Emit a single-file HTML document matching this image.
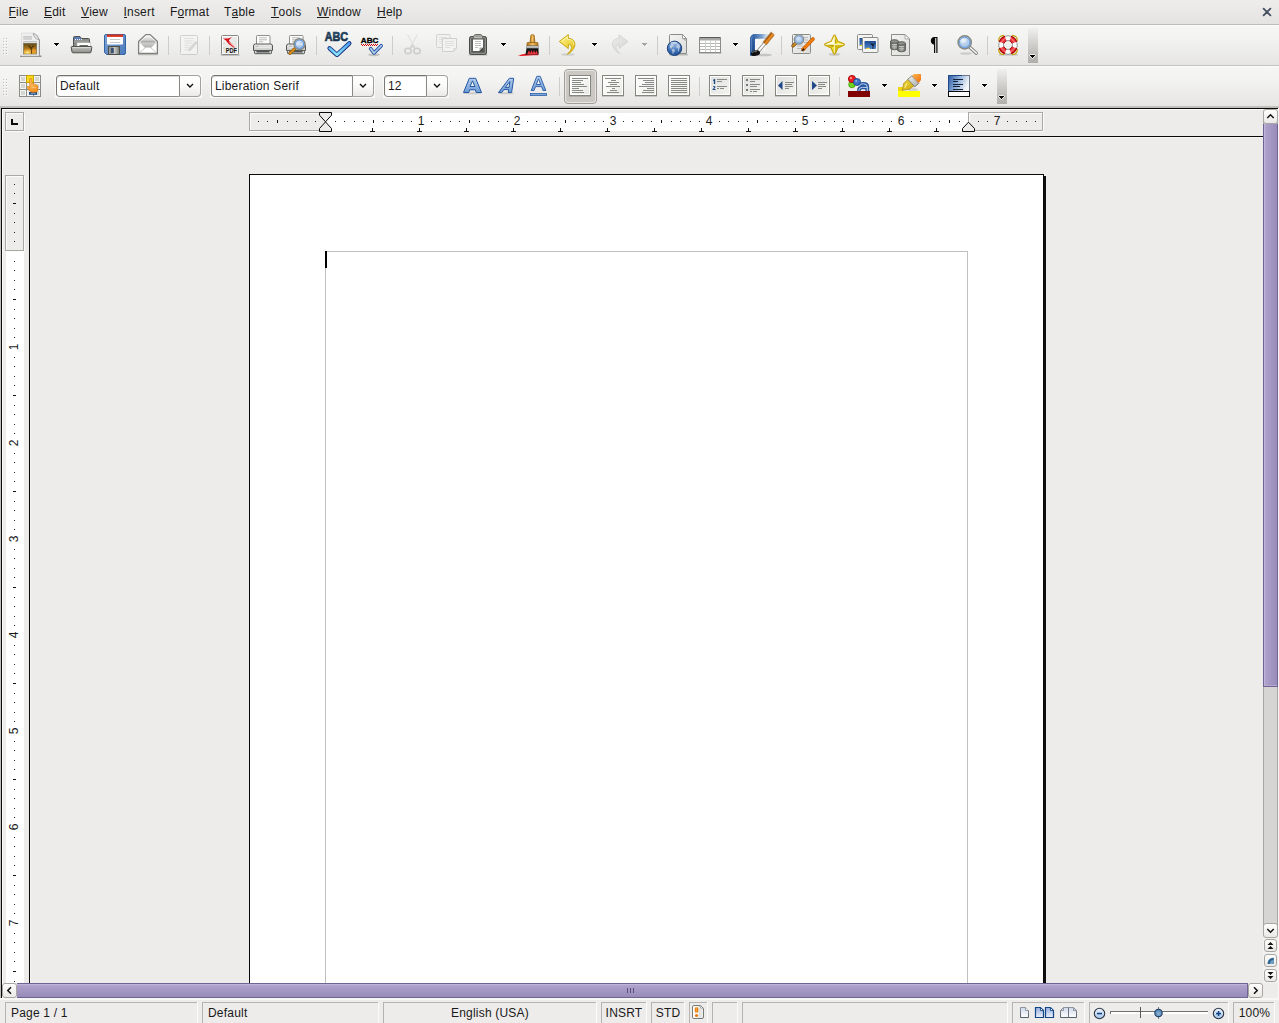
<!DOCTYPE html>
<html lang="en">
<head>
<meta charset="utf-8">
<title>Untitled 1 - Writer</title>
<style>
*{box-sizing:border-box;margin:0;padding:0}
html,body{width:1279px;height:1023px;overflow:hidden;background:#edeceb}
body{position:relative;font-family:"Liberation Sans",sans-serif;font-size:12px;color:#1a1a1a;line-height:1}
#app{position:absolute;left:0;top:0;width:1279px;height:1023px;overflow:hidden}
#app div,#app span,#app svg{position:absolute}
svg{overflow:visible}
svg text{font-family:"Liberation Sans",sans-serif}
/* menubar */
#menubar{left:0;top:0;width:1279px;height:24px;background:linear-gradient(#eeedec,#e4e3e1)}
#menuline{left:0;top:24px;width:1279px;height:1px;background:#bebcb9}
#menubar span{top:5px;letter-spacing:0.2px;white-space:nowrap;font-size:12px;line-height:15px;height:15px;color:#1a1a1a}
#menubar u{text-decoration:none;border-bottom:1px solid #1a1a1a;display:inline-block;height:13px;line-height:15px}
/* toolbars */
.tb{left:0;width:1279px;height:40px;background:linear-gradient(#f6f6f5 0,#f3f3f1 30%,#e6e5e3 100%);border-top:1px solid #fbfbfa}
#tb1{top:25px}
#tb1line{left:0;top:65px;width:1279px;height:1px;background:#c5c3c0}
#tb2{top:66px}
#tb2line{left:0;top:106px;width:1279px;height:2px;background:linear-gradient(#c6c4c1,#bbb9b5)}
.sep{width:1px;height:19px;background:#cfcdca}
.dd{width:0;height:0;border-left:3.5px solid transparent;border-right:3.5px solid transparent;border-top:4px solid #111}
.dd.dis{border-top-color:#aaa8a5}
.ovf{width:10px;height:35px;background:linear-gradient(rgba(176,174,171,0.05),#b1afac)}
/* combos */
.cbw{background:#f9f9f8;height:24px;top:74px}
.cb{top:75px;height:22px;border:1px solid #7a7873;border-color:#72706b #8a8884 #8d8b87 #7a7873;border-right:0;border-radius:4px 0 0 4px;background:#fff;box-shadow:inset 0 1px 1px #dcdbd9}
.cb span{left:3px;top:3px;letter-spacing:0.2px;font-size:12px;line-height:15px;white-space:nowrap;color:#1a1a1a}
.cbb{top:75px;width:22px;height:22px;border:1px solid #a3a09b;border-left-color:#8a8884;border-radius:0 4px 4px 0;background:linear-gradient(#ffffff 0,#fcfcfb 45%,#eae9e7 100%)}
/* workspace frame */
#frame{left:0;top:108px;width:1279px;height:892px;background:#edeceb}
#fr-top{left:1px;top:108px;width:1277px;height:1px;background:#0a0a0a}
#fr-left{left:1px;top:108px;width:1px;height:890px;background:#0a0a0a}
#fr-left0{left:0;top:108px;width:1px;height:890px;background:#c0beba}
#fr-hi-top{left:2px;top:109px;width:1261px;height:1px;background:#fbfbfa}
#fr-hi-left{left:2px;top:109px;width:1px;height:889px;background:#fbfbfa}
/* doc area */
#doc{left:29px;top:136px;width:1234px;height:847px;background:#edeceb;border-left:1px solid #0a0a0a;border-top:1px solid #0a0a0a;overflow:hidden}
#doc-hi-t{left:30px;top:137px;width:1233px;height:1px;background:#f6f5f4}
#doc-hi-l{left:30px;top:137px;width:1px;height:846px;background:#f6f5f4}
#page{left:249px;top:174px;width:795px;height:809px;background:#fff;border-left:1px solid #0a0a0a;border-top:1px solid #0a0a0a;border-right:1px solid #0a0a0a}
#pshadow{left:1044px;top:176px;width:2px;height:807px;background:#0f0f0f}
.tbound{background:#c0c0c0}
/* ruler */
.groove{border:1px solid #aaa8a4;box-shadow:inset 1px 1px 0 #fbfbfa,1px 1px 0 #fbfbfa}
.rnum{font-size:12px;line-height:12px;height:12px;width:20px;text-align:center;color:#1a1a1a}
.vnum{font-size:12px;line-height:12px;height:12px;width:20px;text-align:center;color:#1a1a1a;transform:rotate(-90deg);transform-origin:50% 50%}
/* scrollbars */
.sbtn{background:linear-gradient(#fdfdfc,#eceae8);border:1px solid #a9a6a1;border-radius:3px}
.sth-v{background:linear-gradient(90deg,#b2a7cf 0,#a99dc8 30%,#998bb9 100%);border-left:1px solid #6f6494;border-right:1px solid #6f6494}
.sth-h{background:linear-gradient(#b2a7cf 0,#a99dc8 30%,#998bb9 100%);border-top:1px solid #6f6494;border-bottom:1px solid #6f6494}
/* status bar */
.sf{top:1002px;height:21px;border-left:1px solid #b5b3af;border-top:1px solid #b5b3af}
.sfr{top:1002px;height:21px;width:1px;background:#fbfbfa}
.sf span{top:3px;letter-spacing:0.2px;font-size:12px;line-height:15px;white-space:nowrap;color:#1a1a1a}
</style>
</head>
<body>
<div id="app">
<!-- MENUBAR -->
<div id="menubar">
<span style="left:8.5px"><u>F</u>ile</span>
<span style="left:44px"><u>E</u>dit</span>
<span style="left:81px"><u>V</u>iew</span>
<span style="left:123.500px"><u>I</u>nsert</span>
<span style="left:170px">F<u>o</u>rmat</span>
<span style="left:224px">T<u>a</u>ble</span>
<span style="left:271px"><u>T</u>ools</span>
<span style="left:317px"><u>W</u>indow</span>
<span style="left:377px"><u>H</u>elp</span>
<svg style="left:1262px;top:7px" width="10" height="10" viewBox="0 0 10 10"><path d="M1.600 1.600 L8.400 8.400 M8.400 1.600 L1.600 8.400" stroke="#44505f" stroke-width="1.800" stroke-linecap="round" fill="none"/></svg>
</div>
<div id="menuline"></div>
<div class="tb" id="tb1"></div>
<div id="tb1line"></div>
<div class="tb" id="tb2"></div>
<div id="tb2line"></div>
<!-- TOOLBAR 1 -->
<svg style="left:0;top:25px" width="1279" height="41" viewBox="0 25 1279 41">
<defs>
<pattern id="grip" x="3" y="38" width="3" height="3" patternUnits="userSpaceOnUse"><rect x="0" y="0" width="1" height="1" fill="#c3c1be"/><rect x="1" y="1" width="1" height="1" fill="#fdfdfc"/></pattern>
<linearGradient id="gPaper" x1="0" y1="0" x2="0" y2="1"><stop offset="0" stop-color="#ffffff"/><stop offset="1" stop-color="#e3e3e1"/></linearGradient>
<linearGradient id="gPaperD" x1="0" y1="0" x2="1" y2="1"><stop offset="0" stop-color="#f4f4f3"/><stop offset="1" stop-color="#dcdcda"/></linearGradient>
<linearGradient id="gSun" x1="0" y1="0" x2="0" y2="1"><stop offset="0" stop-color="#5a4716"/><stop offset="0.55" stop-color="#b5761a"/><stop offset="1" stop-color="#f6b12a"/></linearGradient>
<radialGradient id="gSunSpot" cx="0.3" cy="0.9" r="0.45"><stop offset="0" stop-color="#fff3a0"/><stop offset="1" stop-color="#f6b12a" stop-opacity="0"/></radialGradient>
<linearGradient id="gFolderF" x1="0" y1="0" x2="0" y2="1"><stop offset="0" stop-color="#c4c5c1"/><stop offset="1" stop-color="#8b8d88"/></linearGradient>
<linearGradient id="gFloppy" x1="0" y1="0" x2="1" y2="1"><stop offset="0" stop-color="#7fa3d6"/><stop offset="1" stop-color="#4a79bb"/></linearGradient>
<linearGradient id="gMetal" x1="0" y1="0" x2="1" y2="0"><stop offset="0" stop-color="#8a8c88"/><stop offset="0.5" stop-color="#d0d1ce"/><stop offset="1" stop-color="#777975"/></linearGradient>
<linearGradient id="gEnvIn" x1="0" y1="0" x2="0" y2="1"><stop offset="0" stop-color="#f4f4f4"/><stop offset="0.350" stop-color="#d2d2d1"/><stop offset="0.550" stop-color="#a4a4a3"/><stop offset="0.620" stop-color="#cfcfce"/><stop offset="1" stop-color="#b4b4b3"/></linearGradient>
<linearGradient id="gPrn" x1="0" y1="0" x2="0" y2="1"><stop offset="0" stop-color="#f0f0ef"/><stop offset="1" stop-color="#c9cac7"/></linearGradient>
<radialGradient id="gLens" cx="0.4" cy="0.35" r="0.7"><stop offset="0" stop-color="#dbe8f7"/><stop offset="1" stop-color="#8fb4e0"/></radialGradient>
<linearGradient id="gABC" x1="0" y1="0" x2="0" y2="1"><stop offset="0" stop-color="#3b6080"/><stop offset="1" stop-color="#0f2238"/></linearGradient>
<linearGradient id="gChk" x1="0" y1="0" x2="0" y2="1"><stop offset="0" stop-color="#4f9ff2"/><stop offset="1" stop-color="#8ce4ff"/></linearGradient>
<linearGradient id="gClip" x1="0" y1="0" x2="0" y2="1"><stop offset="0" stop-color="#8e908b"/><stop offset="1" stop-color="#6a6c68"/></linearGradient>
<linearGradient id="gUndo" x1="0" y1="0" x2="1" y2="1"><stop offset="0" stop-color="#fdf48a"/><stop offset="1" stop-color="#e2bf10"/></linearGradient>
<linearGradient id="gRedo" x1="0" y1="0" x2="1" y2="1"><stop offset="0" stop-color="#ececeb"/><stop offset="1" stop-color="#d4d4d2"/></linearGradient>
<radialGradient id="gGlobe" cx="0.45" cy="0.3" r="0.75"><stop offset="0" stop-color="#8db0de"/><stop offset="0.6" stop-color="#3a6cb0"/><stop offset="1" stop-color="#1f4a8c"/></radialGradient>
<linearGradient id="gDrawT" x1="0" y1="0" x2="1" y2="0"><stop offset="0" stop-color="#2e5c9e"/><stop offset="0.55" stop-color="#7ea3d2"/><stop offset="1" stop-color="#e8eef6" stop-opacity="0.3"/></linearGradient>
<linearGradient id="gDrawL" x1="0" y1="0" x2="0" y2="1"><stop offset="0" stop-color="#3566ab"/><stop offset="1" stop-color="#1f4785"/></linearGradient>
<radialGradient id="gStar" cx="0.5" cy="0.5" r="0.5"><stop offset="0" stop-color="#ffffff"/><stop offset="0.45" stop-color="#fdf27a"/><stop offset="1" stop-color="#f1d52a"/></radialGradient>
<linearGradient id="gSky" x1="0" y1="0" x2="0" y2="1"><stop offset="0" stop-color="#1d4a90"/><stop offset="1" stop-color="#4f86cc"/></linearGradient>
<linearGradient id="gCyl" x1="0" y1="0" x2="1" y2="0"><stop offset="0" stop-color="#5f615d"/><stop offset="0.5" stop-color="#a2a4a0"/><stop offset="1" stop-color="#686a66"/></linearGradient>
<linearGradient id="gWood" x1="0" y1="0" x2="1" y2="0"><stop offset="0" stop-color="#b87518"/><stop offset="0.5" stop-color="#f0c06a"/><stop offset="1" stop-color="#b87518"/></linearGradient>
<linearGradient id="gOvf" x1="0" y1="0" x2="0" y2="1"><stop offset="0" stop-color="#b1afac" stop-opacity="0.08"/><stop offset="1" stop-color="#b1afac"/></linearGradient>
</defs>
<!-- grip -->
<rect x="3" y="38" width="5" height="17" fill="url(#grip)"/>

<!-- New -->
<g id="i-new">
<rect x="20" y="55.400" width="21.500" height="1.700" rx="0.800" fill="#3c3c3c" opacity="0.600"/>
<path d="M21.500 33 H34 Q38.200 34.600 39.500 39.800 V55.800 H21.500 Z" fill="#efefef" stroke="#dadada" stroke-width="0.800"/>
<path d="M39.400 39.500 V55.800" stroke="#8e8e8e" stroke-width="1.100"/>
<path d="M33.300 33.300 Q33.600 38.600 39.300 39.900 Q38.200 34.800 33.300 33.300 Z" fill="#e4e4e4" stroke="#9c9c9c" stroke-width="0.800"/>
<rect x="23.300" y="36" width="8.700" height="3.800" fill="#cbcbcb"/>
<rect x="23.300" y="37.200" width="8.700" height="0.500" fill="#d8d8d8"/><rect x="23.300" y="38.500" width="8.700" height="0.500" fill="#d8d8d8"/>
<rect x="23.300" y="41" width="13.700" height="1" fill="#c6c6c6"/>
<rect x="23.500" y="43.200" width="13.200" height="10.800" fill="url(#gSun)" stroke="#77725f" stroke-width="0.700"/>
<rect x="23.800" y="43.500" width="12.600" height="10.200" fill="url(#gSunSpot)"/>
<ellipse cx="34" cy="50.500" rx="2" ry="1.500" fill="#f8a838" opacity="0.600"/>
<path d="M31.500 53.800 Q31.700 50 31 47.500 M31.300 49 L29 45.500 M31.200 48.200 L33.200 45.800 M30.500 47.400 L28.500 46.200 M32.500 46.700 L33.800 46.600" stroke="#2a1c05" stroke-width="0.700" fill="none"/>
</g>
<g shape-rendering="crispEdges"><path d="M54 42 h5 v1 h1 v1 h-1 v1 h-1 v1 h-1 v1 h-1 v-1 h-1 v-1 h-1 v-1 h-1 v-1 h1 Z" fill="#ffffff" opacity="0.750"/><g fill="#050505"><rect x="54" y="43" width="5" height="1"/><rect x="55" y="44" width="3" height="1"/><rect x="56" y="45" width="1" height="1"/></g></g>

<!-- Open -->
<g id="i-open">
<path d="M73.500 37.500 Q73.500 36.500 74.500 36.500 H80 L81.500 38.500 H88.500 Q89.500 38.500 89.500 39.500 V50 H73.500 Z" fill="#8b8d88" stroke="#50524e"/>
<path d="M74 37 H80 L81.200 39 V40.300 H74 Z" fill="#5f7bb5"/>
<rect x="75" y="39" width="1" height="1.200" fill="#f4f6fa"/><rect x="77" y="39" width="1" height="1.200" fill="#f4f6fa"/><rect x="79" y="39" width="1" height="1.200" fill="#f4f6fa"/><rect x="81" y="39" width="1" height="1.200" fill="#f4f6fa"/>
<rect x="74.200" y="40.500" width="14.800" height="2" fill="#9a9c97"/>
<rect x="77" y="42.700" width="13.700" height="3.600" fill="#ffffff" stroke="#a9aba6" stroke-width="0.500"/>
<path d="M79 46 L80 45 H87.500 L88.500 46 Z" fill="#6a6c68"/>
<path d="M72 46.500 H91 Q92 46.500 91.800 47.500 L91 52 Q90.800 52.800 90 52.800 H73 Q72.200 52.800 72 52 L71.200 47.500 Q71 46.500 72 46.500 Z" fill="url(#gFolderF)" stroke="#50524e" stroke-linejoin="round"/>
<path d="M72.600 47.600 H90.400" stroke="#e2e3e0" stroke-width="0.800"/>
</g>

<!-- Save -->
<g id="i-save">
<path d="M104.5 36 Q104.5 34.5 106 34.5 H124 Q125.5 34.5 125.5 36 V53 Q125.5 54.5 124 54.5 H106.5 L104.5 52.5 Z" fill="url(#gFloppy)" stroke="#3465a4"/>
<rect x="107" y="35" width="16" height="9.5" rx="0.8" fill="#ffffff"/>
<rect x="107" y="34.5" width="16" height="2.4" fill="#d9301c"/>
<rect x="110" y="39" width="10" height="1" fill="#c9c9c9"/><rect x="110" y="42" width="10" height="1" fill="#c9c9c9"/>
<rect x="108.5" y="46.5" width="11" height="8" fill="url(#gMetal)" stroke="#4b4d49"/>
<rect x="111" y="48" width="2.6" height="5" fill="#2f4f86" stroke="#55575a" stroke-width="0.6"/>
</g>

<!-- Mail -->
<g id="i-mail">
<rect x="138" y="54" width="20" height="1.200" fill="#666" opacity="0.400"/>
<path d="M138.600 41.500 L145.800 34.600 H150.200 L157.400 41.500 V53.400 H138.600 Z" fill="#ffffff" stroke="#7e807c" stroke-width="1.300" stroke-linejoin="round"/>
<path d="M140.200 41.800 L146.300 36 H149.700 L155.800 41.800 L151.800 47 H144.200 Z" fill="url(#gEnvIn)"/>
<path d="M139.800 52.500 L146.200 46.800 M156.200 52.500 L149.800 46.800 M139.800 42.300 L144.800 47.200 H151.200 L156.200 42.300" stroke="#b4b6b2" stroke-width="0.800" fill="none"/>
</g>

<rect x="168" y="36" width="1" height="19" fill="#cfcdca"/>

<!-- Edit (disabled) -->
<g id="i-edit" opacity="0.600">
<rect x="180.500" y="35.500" width="17" height="19" rx="1" fill="#f6f6f5" stroke="#b9b9b7"/>
<path d="M184.500 38.500 H193.500 M184.500 40.800 H193.500 M184.500 43 H192 M184.500 45.300 H190 M184.500 47.600 H189 M184.500 49.800 H187.500" stroke="#cacac8" stroke-width="0.800"/>
<path d="M189.200 48.600 L195.500 41.600 L197 43 L190.700 50 L188.600 50.600 Z" fill="#d2d2d0" stroke="#a8a8a6" stroke-width="0.700"/>
</g>

<rect x="209" y="36" width="1" height="19" fill="#cfcdca"/>

<!-- PDF -->
<g id="i-pdf">
<rect x="220.700" y="54.300" width="19" height="1.400" rx="0.700" fill="#555" opacity="0.350"/>
<rect x="221.500" y="35.500" width="17" height="19" rx="1.200" fill="url(#gPaperD)" stroke="#878985"/>
<rect x="222.500" y="36.500" width="15" height="17" fill="none" stroke="#ffffff" stroke-width="0.800"/>
<path d="M222.800 37.300 C225.500 40 228.500 38.800 232.800 36.600 C230.300 38.600 229.300 39.600 228.800 40.600 C230.800 43 232.800 45.500 235 47.800 C231 46.800 227.800 43.500 226 40.600 C224.500 39.800 223.500 38.600 222.800 37.300 Z" fill="#d8121a"/>
<path d="M226 38.500 C228 41.500 230.500 44.500 234 47.300" stroke="#d8121a" stroke-width="1.300" fill="none"/>
<path d="M229.500 41.800 C231 43.800 232.500 45.300 234.600 47.300" stroke="#f5b0b0" stroke-width="1.400" fill="none" opacity="0.750"/>
<text x="225.800" y="52.900" font-size="6.800" font-weight="bold" fill="#111" textLength="11.200" lengthAdjust="spacingAndGlyphs">PDF</text>
<rect x="223.500" y="43" width="1" height="1" fill="#aaa"/><rect x="223.500" y="47.500" width="1" height="1" fill="#aaa"/>
</g>

<!-- Print -->
<g id="i-print">
<rect x="256.5" y="35.500" width="13.500" height="10" rx="0.800" fill="#fdfdfd" stroke="#8e908c"/>
<path d="M259 37.800 H267 M259 39.800 H267 M259 41.800 H263" stroke="#b4b6b2" stroke-width="0.900"/>
<path d="M255.5 44 H270.5 Q272.5 44 272.5 46 V50.500 H253.5 V46 Q253.5 44 255.5 44 Z" fill="url(#gPrn)" stroke="#555753" stroke-linejoin="round"/>
<rect x="255" y="46.300" width="16" height="1.600" fill="#fbfbfb" stroke="#c4c5c2" stroke-width="0.400"/>
<path d="M256.3 47.300 L257.5 45.800 L258.3 46.800" stroke="#888" stroke-width="0.600" fill="none"/>
<rect x="254.5" y="50.500" width="17" height="3.200" rx="0.800" fill="#d4d6d2" stroke="#555753"/>
<rect x="256.5" y="51.200" width="13" height="1.200" fill="#30343a"/>
</g>

<!-- Print preview -->
<g id="i-preview">
<rect x="289.5" y="35.500" width="13.500" height="10" rx="0.800" fill="#fdfdfd" stroke="#8e908c"/>
<path d="M292 37.800 H300 M292 39.800 H300 M292 41.800 H296" stroke="#b4b6b2" stroke-width="0.900"/>
<path d="M288.5 44 H303.5 Q305.5 44 305.5 46 V50.500 H286.5 V46 Q286.5 44 288.5 44 Z" fill="url(#gPrn)" stroke="#555753" stroke-linejoin="round"/>
<rect x="288" y="46.300" width="16" height="1.600" fill="#fbfbfb" stroke="#c4c5c2" stroke-width="0.400"/>
<path d="M289.3 47.300 L290.5 45.800 L291.3 46.800" stroke="#888" stroke-width="0.600" fill="none"/>
<rect x="287.5" y="50.500" width="17" height="3.200" rx="0.800" fill="#d4d6d2" stroke="#555753"/>
<rect x="289.5" y="51.200" width="13" height="1.200" fill="#30343a"/>
<path d="M294.500 49 L290 53.200" stroke="#8f5902" stroke-width="3.200" stroke-linecap="round"/>
<path d="M294.500 49 L290 53.200" stroke="#d98e1e" stroke-width="1.900" stroke-linecap="round"/>
<circle cx="299.500" cy="44.200" r="5.500" fill="url(#gLens)" stroke="#85877f" stroke-width="1.400"/>
<circle cx="299.500" cy="44.200" r="4.200" fill="none" stroke="#5f97dc" stroke-width="1"/>
<path d="M296 44.200 H303" stroke="#e6eef9" stroke-width="0.900"/>
</g>

<rect x="316" y="36" width="1" height="19" fill="#cfcdca"/>

<!-- Spellcheck -->
<g id="i-spell">
<text x="324.800" y="41" font-size="12.600" font-weight="bold" fill="url(#gABC)" stroke="#1d3852" stroke-width="0.700" textLength="23.200" lengthAdjust="spacingAndGlyphs" font-family="DejaVu Sans, sans-serif">ABC</text>
<path d="M329.600 48.300 L337 54.800 L349.300 43.300" stroke="#0f2f78" stroke-width="4.400" fill="none" stroke-linecap="round" stroke-linejoin="round"/>
<path d="M329.600 48.300 L337 54.800 L349.300 43.300" stroke="url(#gChk)" stroke-width="2.600" fill="none" stroke-linecap="round" stroke-linejoin="round"/>
</g>

<!-- AutoSpell -->
<g id="i-autospell">
<ellipse cx="374" cy="54.800" rx="6" ry="1.400" fill="#444" opacity="0.250"/>
<text x="360.800" y="42.500" font-size="8" font-weight="bold" fill="#000" stroke="#000" stroke-width="0.350" textLength="17.600" lengthAdjust="spacingAndGlyphs" font-family="DejaVu Sans, sans-serif">ABC</text>
<g fill="#d40000" shape-rendering="crispEdges"><rect x="361" y="44" width="1" height="1"/><rect x="362" y="45" width="1" height="1"/><rect x="363" y="44" width="1" height="1"/><rect x="364" y="45" width="1" height="1"/><rect x="365" y="44" width="1" height="1"/><rect x="366" y="45" width="1" height="1"/><rect x="367" y="44" width="1" height="1"/><rect x="368" y="45" width="1" height="1"/><rect x="369" y="44" width="1" height="1"/><rect x="370" y="45" width="1" height="1"/><rect x="371" y="44" width="1" height="1"/><rect x="372" y="45" width="1" height="1"/><rect x="373" y="44" width="1" height="1"/><rect x="374" y="45" width="1" height="1"/><rect x="375" y="44" width="1" height="1"/><rect x="376" y="45" width="1" height="1"/><rect x="377" y="44" width="1" height="1"/></g>
<path d="M370.600 48.600 L374 53 L381.200 45.700" stroke="#1f4f9e" stroke-width="3.500" fill="none" stroke-linecap="round" stroke-linejoin="round"/>
<path d="M370.600 48.600 L374 53 L381.200 45.700" stroke="#bcd4f2" stroke-width="1.700" fill="none" stroke-linecap="round" stroke-linejoin="round"/>
<path d="M374.600 52 L381 45.900" stroke="#6f9fd8" stroke-width="1.700" fill="none" stroke-dasharray="0.500 0.700"/>
</g>

<rect x="392" y="36" width="1" height="19" fill="#cfcdca"/>

<!-- Cut (disabled) -->
<g id="i-cut" fill="none">
<path d="M407.500 34.500 L415.500 48.500 M417.500 34.500 L409.500 48.500" stroke="#dcdcda" stroke-width="1"/>
<ellipse cx="408" cy="51" rx="3.200" ry="2.700" stroke="#cdcdcb" stroke-width="1.600"/>
<ellipse cx="417" cy="51" rx="3.200" ry="2.700" stroke="#cdcdcb" stroke-width="1.600"/>
<path d="M410.300 48.500 L412.500 45.500 L414.700 48.500" stroke="#d2d2d0" stroke-width="1.400"/>
</g>

<!-- Copy (disabled) -->
<g id="i-copy">
<rect x="436.5" y="34.5" width="13.5" height="13" rx="1" fill="#f1f1f0" stroke="#d2d2d0"/>
<path d="M439 37.5 H447 M439 39.5 H447 M439 41.5 H447 M439 43.5 H444" stroke="#dddddb" stroke-width="0.8"/>
<path d="M442.5 38.500 H456.500 V48.5 L453.5 51.5 H442.5 Z" fill="#f3f3f2" stroke="#cfcfcd" stroke-linejoin="round"/>
<path d="M445 41.5 H454 M445 43.500 H454 M445 45.5 H454 M445 47.5 H450" stroke="#dbdbd9" stroke-width="0.8"/>
<path d="M453.5 51.5 V48.5 H456.5" fill="none" stroke="#d4d4d2" stroke-width="0.8"/>
</g>

<!-- Paste -->
<g id="i-paste">
<rect x="468.500" y="54.200" width="19" height="1.400" rx="0.700" fill="#444" opacity="0.300"/>
<rect x="469.500" y="36.500" width="17" height="18" rx="1.800" fill="#6c6e6a" stroke="#484a46"/>
<rect x="470.600" y="37.600" width="14.800" height="15.800" rx="1" fill="none" stroke="#9c9e9a" stroke-width="0.800"/>
<rect x="471.500" y="38.500" width="13" height="14" fill="#5d5f5b"/>
<path d="M473.500 38.800 V37.200 Q473.500 34.500 476 34.500 H480 Q482.500 34.500 482.500 37.200 V38.800 Z" fill="#c0c1ba" stroke="#5e605c" stroke-width="0.900"/>
<rect x="475" y="35.600" width="6" height="1.200" rx="0.600" fill="#8e908a"/>
<path d="M473 39.500 H483 V47.500 L479.500 51 H473 Z" fill="#ffffff"/>
<path d="M475 41.500 H481 M475 43.500 H481 M475 45.500 H481 M475 47.500 H478" stroke="#b8b8b6" stroke-width="0.900"/>
<path d="M479.500 51 V47.500 H483 Z" fill="#a9aba7"/>
<path d="M483 47.500 V51.500 H479 Z" fill="#3c3e3a" opacity="0.700"/>
</g>
<g shape-rendering="crispEdges"><path d="M501 42 h5 v1 h1 v1 h-1 v1 h-1 v1 h-1 v1 h-1 v-1 h-1 v-1 h-1 v-1 h-1 v-1 h1 Z" fill="#ffffff" opacity="0.750"/><g fill="#050505"><rect x="501" y="43" width="5" height="1"/><rect x="502" y="44" width="3" height="1"/><rect x="503" y="45" width="1" height="1"/></g></g>

<!-- Paintbrush -->
<g id="i-brush">
<path d="M517.500 55.800 C523 54.200 529 52.500 538.500 51.800 L538.200 55.300 C530 55.300 524 56.200 517.500 55.800 Z" fill="#e8141c"/>
<path d="M530.600 37.500 Q530.200 34.600 532.500 34.600 Q534.800 34.600 534.400 37.500 L534.900 42.500 H530.100 Z" fill="url(#gWood)" stroke="#8f5902" stroke-width="0.700"/>
<path d="M528 42.500 H537 Q538 42.500 538 43.500 V46 H527 V43.500 Q527 42.500 528 42.500 Z" fill="url(#gWood)" stroke="#8f5902" stroke-width="0.700"/>
<rect x="526.800" y="45.800" width="11.400" height="2.300" fill="#c4c5c2" stroke="#666864" stroke-width="0.500"/>
<path d="M526.500 48.200 H538.500 L538.500 54.800 H525.500 Z" fill="#141414"/>
<path d="M527 54.500 L529 50.300 L530.200 53 L531.500 50 L532.800 53 L534 50 L535.300 53 L536.500 50.500 L538 54.500 Z" fill="#e8343c"/>
</g>

<rect x="549" y="36" width="1" height="19" fill="#cfcdca"/>

<!-- Undo -->
<g id="i-undo">
<ellipse cx="568" cy="54.500" rx="7" ry="1.300" fill="#444" opacity="0.160"/>
<path d="M559.300 41.500 L568.300 34.600 V38.400 C573 38.400 575.700 41.500 574.700 46 C573.700 49.600 571 52.400 567.300 54.200 C570.800 51 572.100 48 571.300 46 C570.800 45 570 44.600 568.300 44.600 V48.600 Z" fill="url(#gUndo)" stroke="#c4a000" stroke-width="0.900" stroke-linejoin="round"/>
<path d="M561.200 41.500 L567.400 36.800 V39.400 C571.500 39.400 574.200 41.500 573.800 45" fill="none" stroke="#fffbd0" stroke-width="0.800" opacity="0.900"/>
</g>
<g shape-rendering="crispEdges"><path d="M592 42 h5 v1 h1 v1 h-1 v1 h-1 v1 h-1 v1 h-1 v-1 h-1 v-1 h-1 v-1 h-1 v-1 h1 Z" fill="#ffffff" opacity="0.750"/><g fill="#050505"><rect x="592" y="43" width="5" height="1"/><rect x="593" y="44" width="3" height="1"/><rect x="594" y="45" width="1" height="1"/></g></g>

<!-- Redo (disabled) -->
<g id="i-redo">
<path d="M628 41.500 L619 34.800 V38.400 C614.500 38.400 611.800 41.500 612.800 46 C613.800 49.400 616.300 52 619.800 53.600 C616.600 50.800 615.500 48 616.300 46 C616.800 45 617.500 44.700 619 44.700 V48.400 Z" fill="url(#gRedo)" stroke="#d0d0ce" stroke-width="0.800" stroke-linejoin="round"/>
</g>
<g shape-rendering="crispEdges" fill="#a5a3a0"><rect x="642" y="43" width="5" height="1"/><rect x="643" y="44" width="3" height="1"/><rect x="644" y="45" width="1" height="1"/></g>

<rect x="657" y="36" width="1" height="19" fill="#cfcdca"/>

<!-- Hyperlink -->
<g id="i-link">
<rect x="669" y="54" width="19" height="1.500" rx="0.700" fill="#444" opacity="0.300"/>
<path d="M670.500 34.500 H682.500 L686.500 38.500 V53.500 H669.500 V35.500 Q669.500 34.500 670.500 34.500 Z" fill="url(#gPaperD)" stroke="#8a8c88" stroke-linejoin="round"/>
<path d="M682.500 34.500 V38.500 H686.500 Z" fill="#ffffff" stroke="#8a8c88" stroke-width="0.800" stroke-linejoin="round"/>
<path d="M682.800 38.800 H686 L685.500 41.500 Z" fill="#777" opacity="0.450"/>
<circle cx="674.500" cy="48.300" r="7.200" fill="url(#gGlobe)" stroke="#1c437f" stroke-width="1"/>
<ellipse cx="674" cy="43" rx="3.500" ry="1.200" fill="#dfe9f6" opacity="0.700"/>
<path d="M669.500 45.500 l1.800 -1.600 l1.800 0.300 l0.500 1.500 l-1.500 1.500 l-0.600 1.600 l-1.400 -0.600 Z M676.500 44 l1.600 -0.600 l1.600 1.400 l0.600 2.400 l-0.900 1.200 l-0.500 2.800 l-0.800 0.200 l-0.300 -2.800 l-1.600 -1.300 Z M671.800 49.600 l1.700 -0.600 l1.400 1.200 l-0.600 1.700 l-0.800 0.400 l-0.200 2 l-0.700 -0.200 l-0.100 -2.100 Z" fill="#d5e0f0" opacity="0.700"/>
</g>

<!-- Table -->
<g id="i-table">
<rect x="699" y="52.500" width="22.500" height="1.300" fill="#555" opacity="0.350"/>
<rect x="699.500" y="37.500" width="21" height="15" fill="#ffffff" stroke="#8a8c88"/>
<rect x="700" y="37" width="20" height="1.600" fill="#5b5d59"/>
<rect x="700" y="38.600" width="20" height="1.900" fill="#a9aba7"/>
<path d="M700 43.500 H720 M700 46.500 H720 M700 49.500 H720" stroke="#b4b6b2" stroke-width="1"/>
<path d="M705.500 40.500 V52 M710.500 40.500 V52 M715.500 40.500 V52" stroke="#cbcdc9" stroke-width="1"/>
</g>
<g shape-rendering="crispEdges"><path d="M733 42 h5 v1 h1 v1 h-1 v1 h-1 v1 h-1 v1 h-1 v-1 h-1 v-1 h-1 v-1 h-1 v-1 h1 Z" fill="#ffffff" opacity="0.750"/><g fill="#050505"><rect x="733" y="43" width="5" height="1"/><rect x="734" y="44" width="3" height="1"/><rect x="735" y="45" width="1" height="1"/></g></g>

<!-- Draw -->
<g id="i-draw">
<ellipse cx="764" cy="55" rx="8" ry="1.300" fill="#444" opacity="0.220"/>
<rect x="755" y="39" width="10.500" height="11.500" fill="#f7f7f6" opacity="0.900"/>
<path d="M752.500 55.500 V39.500 Q752.500 36.400 755.600 36.400 H770" fill="none" stroke="url(#gDrawT)" stroke-width="4.800"/>
<path d="M752.500 55.500 V40 Q752.500 37 754.500 36.500" fill="none" stroke="url(#gDrawL)" stroke-width="4.800"/>
<path d="M751.300 54 V40 Q751.300 37.500 753 36.600" fill="none" stroke="#6f98d0" stroke-width="0.900" opacity="0.800"/>
<path d="M772.800 33 L764 43.800" stroke="#8c4a06" stroke-width="4.600" opacity="0.550"/>
<path d="M771.800 33 L763.800 43" stroke="#a85a08" stroke-width="1.500"/>
<path d="M773 34 L764.800 44" stroke="#f28a1c" stroke-width="1.700"/>
<path d="M774 35.200 L766 44.800" stroke="#b86a10" stroke-width="1.200" opacity="0.800"/>
<path d="M764.600 43.600 L758 51.500" stroke="#858783" stroke-width="3.600"/>
<path d="M764.600 43.600 L758 51.500" stroke="#fdfdfd" stroke-width="2"/>
<ellipse cx="755.500" cy="53.200" rx="4.600" ry="2.700" fill="#101010" transform="rotate(-12 755.500 53.200)"/>
<path d="M752 52.500 Q754 51 757 51.800" stroke="#8a8c88" stroke-width="0.800" fill="none"/>
</g>

<rect x="781" y="36" width="1" height="19" fill="#cfcdca"/>

<!-- Find & Replace -->
<g id="i-find">
<rect x="792.500" y="34.500" width="18" height="19" rx="1" fill="url(#gPaperD)" stroke="#8a8c88"/>
<path d="M804 37.500 H808 M805 40 H808 M804 42.500 H807 M797 46 H803 M797 48.500 H802" stroke="#b4b5b2" stroke-width="0.9"/>
<path d="M796 43 L793 45.800" stroke="#7a4a06" stroke-width="3.400" stroke-linecap="round"/>
<path d="M796 43 L793 45.800" stroke="#c98a2a" stroke-width="2" stroke-linecap="round"/>
<circle cx="799" cy="39.500" r="4.700" fill="url(#gLens)" stroke="#8c8e8a" stroke-width="1.300"/>
<circle cx="799" cy="39.500" r="3.500" fill="none" stroke="#6f9fd8" stroke-width="0.700"/>
<path d="M813 39 L803 49.500" stroke="#c45c04" stroke-width="3.600" stroke-linecap="round"/>
<path d="M813 39 L803 49.500" stroke="#f57f10" stroke-width="2.200" stroke-linecap="round" stroke-dasharray="0.9 0.5"/>
<path d="M803.500 48 L801 51.200 L804.800 50 Z" fill="#1a1a1a"/>
</g>

<!-- Navigator -->
<g id="i-nav">
<ellipse cx="834.500" cy="54.300" rx="6" ry="1.600" fill="#555" opacity="0.220"/>
<clipPath id="cStar"><path d="M833.800 35.500 Q834.500 34.500 835.200 35.500 L837.800 41.200 L843.800 43.800 Q844.800 44.500 843.800 45.200 L837.800 47.900 L835.200 53.700 Q834.500 54.700 833.800 53.700 L831.200 47.900 L825.200 45.200 Q824.200 44.500 825.200 43.800 L831.200 41.200 Z"/></clipPath>
<g clip-path="url(#cStar)">
<rect x="823" y="33" width="11.500" height="11.500" fill="#fffce0"/>
<rect x="834.500" y="33" width="11.500" height="11.500" fill="#eedc30"/>
<rect x="823" y="44.500" width="11.500" height="11.500" fill="#f4e43c"/>
<rect x="834.500" y="44.500" width="11.500" height="11.500" fill="#d2be10"/>
<path d="M834.500 44.500 L825 44.500 L833 47.300 Z" fill="#b9a608"/>
<path d="M834.500 44.500 V36 L836.600 42.500 Z" fill="#b9a608"/>
<path d="M834.500 44.500 L844 44.500 L838 43.200 Z" fill="#fff9b0"/>
<path d="M834.500 35 V54 M825 44.500 H844" stroke="#fffde8" stroke-width="0.600"/>
</g>
<path d="M833.800 35.500 Q834.500 34.500 835.200 35.500 L837.800 41.200 L843.800 43.800 Q844.800 44.500 843.800 45.200 L837.800 47.900 L835.200 53.700 Q834.500 54.700 833.800 53.700 L831.200 47.900 L825.200 45.200 Q824.200 44.500 825.200 43.800 L831.200 41.200 Z" fill="none" stroke="#c8a408" stroke-width="1.200" stroke-linejoin="round"/>
</g>

<!-- Gallery -->
<g id="i-gallery">
<rect x="857.500" y="34.500" width="15" height="15" rx="1" fill="#f4f4f3" stroke="#8a8c88"/>
<rect x="859.500" y="38" width="11" height="8" fill="url(#gSky)"/>
<path d="M859.500 46 Q861.500 43.500 863.500 46 Z" fill="#f6d32d"/>
<rect x="862.500" y="37.500" width="15.500" height="15" rx="1" fill="#f4f4f3" stroke="#8a8c88"/>
<rect x="864.500" y="41" width="11.500" height="8" rx="0.800" fill="url(#gSky)"/>
<path d="M865.500 49 Q868 45.800 870.500 49 Z" fill="#f6d32d"/>
<path d="M873 49 V44 M873 46 L871.500 44 M873 45.500 L874.600 43 M870.500 44 H872.500" stroke="#0d0d0d" stroke-width="0.800" fill="none"/>
</g>

<!-- Data sources -->
<g id="i-data">
<path d="M891.500 34.500 H905 L909.500 39 V55.500 H891.500 Z" fill="url(#gPaperD)" stroke="#8a8c88" stroke-linejoin="round"/>
<path d="M905 34.500 V39 H909.500 Z" fill="#fdfdfd" stroke="#9a9c98" stroke-width="0.800" stroke-linejoin="round"/>
<path d="M890.500 41.500 V48 A4 1.800 0 0 0 898.500 48 V41.500 Z" fill="url(#gCyl)" stroke="#5b5d59" stroke-width="0.900"/>
<ellipse cx="894.500" cy="41.500" rx="4" ry="1.800" fill="#8e908c" stroke="#50524e" stroke-width="0.900"/>
<path d="M892 44.500 H897 M892 46.800 H897" stroke="#dcdcda" stroke-width="0.700"/>
<path d="M897.500 43.500 V50 A4 1.800 0 0 0 905.500 50 V43.500 Z" fill="url(#gCyl)" stroke="#5b5d59" stroke-width="0.900"/>
<ellipse cx="901.500" cy="43.500" rx="4" ry="1.800" fill="#8e908c" stroke="#50524e" stroke-width="0.900"/>
<path d="M899 46.500 H904 M899 48.800 H904" stroke="#dcdcda" stroke-width="0.700"/>
</g>

<!-- Nonprinting -->
<g id="i-pilcrow">
<path d="M937.500 37 H934.500 C931.800 37 930.800 39 930.800 40.800 C930.800 42.800 932 44.500 934 44.500 V53 H935.200 V38 H936.300 V53 H937.500 Z" fill="#0a0a0a"/>
</g>

<!-- Zoom -->
<g id="i-zoom">
<ellipse cx="966" cy="53.500" rx="6" ry="1.300" fill="#444" opacity="0.180"/>
<path d="M969.500 47 L976.300 53.200" stroke="#777975" stroke-width="3.200" stroke-linecap="round"/>
<path d="M969.500 47 L976.300 53.200" stroke="#f2f2f1" stroke-width="1.600" stroke-linecap="round"/>
<circle cx="964.700" cy="42.400" r="6.600" fill="url(#gLens)" stroke="#858783" stroke-width="1.500"/>
<circle cx="964.700" cy="42.400" r="5.200" fill="none" stroke="#5f97dc" stroke-width="0.900"/>
<ellipse cx="963.300" cy="40.400" rx="3" ry="2" fill="#ffffff" opacity="0.450"/>
</g>

<rect x="987" y="36" width="1" height="19" fill="#cfcdca"/>

<!-- Help -->
<g id="i-help">
<rect x="999" y="54.200" width="19" height="1.400" rx="0.700" fill="#555" opacity="0.300"/>
<path d="M998.700 41 Q998.500 35.600 1004 35.400 M1012 35.400 Q1017.500 35.600 1017.300 41 M1017.300 49 Q1017.500 54.400 1012 54.600 M1004 54.600 Q998.500 54.400 998.700 49" fill="none" stroke="#c4a000" stroke-width="1.200"/>
<circle cx="1008" cy="45" r="9.300" fill="#fafafa" stroke="#8f918d" stroke-width="0.900"/>
<path d="M1008 45 L1016.74 41.82 A9.3 9.3 0 0 0 1011.18 36.26 Z M1008 45 L1004.82 36.26 A9.3 9.3 0 0 0 999.26 41.82 Z M1008 45 L999.26 48.18 A9.3 9.3 0 0 0 1004.82 53.74 Z M1008 45 L1011.18 53.74 A9.3 9.3 0 0 0 1016.74 48.18 Z " fill="#ee3036"/>
<path d="M1016.74 41.82 A9.3 9.3 0 0 0 1011.18 36.26 M1004.82 36.26 A9.3 9.3 0 0 0 999.26 41.82 M999.26 48.18 A9.3 9.3 0 0 0 1004.82 53.74 M1011.18 53.74 A9.3 9.3 0 0 0 1016.74 48.18 " fill="none" stroke="#a40000" stroke-width="1.100"/>
<circle cx="1008" cy="45" r="4.500" fill="#f0efed" stroke="#8f918d" stroke-width="0.900"/>
<path d="M1012.23 43.46 A4.5 4.5 0 0 0 1009.54 40.77 M1006.46 40.77 A4.5 4.5 0 0 0 1003.77 43.46 M1003.77 46.54 A4.5 4.5 0 0 0 1006.46 49.23 M1009.54 49.23 A4.5 4.5 0 0 0 1012.23 46.54 " fill="none" stroke="#a40000" stroke-width="1"/>
<circle cx="1008" cy="45" r="7" fill="none" stroke="#ffffff" stroke-width="1.600" opacity="0.250"/>
</g>

<!-- overflow -->
<rect x="1028" y="28" width="10" height="35" fill="url(#gOvf)"/>
<g shape-rendering="crispEdges"><path d="M1030 54 h5 v1 h1 v1 h-1 v1 h-1 v1 h-1 v1 h-1 v-1 h-1 v-1 h-1 v-1 h-1 v-1 h1 Z" fill="#ffffff" opacity="0.750"/><g fill="#050505"><rect x="1030" y="55" width="5" height="1"/><rect x="1031" y="56" width="3" height="1"/><rect x="1032" y="57" width="1" height="1"/></g></g>
</svg>
<!-- TOOLBAR 2 -->
<div class="cbw" style="left:55px;width:147px"></div><div class="cb" style="left:56px;width:123px"><span>Default</span></div><div class="cbb" style="left:179px"></div><svg style="left:185px;top:82px" width="10" height="8" viewBox="0 0 10 8"><path d="M2 1.900 L5 4.900 L8 1.900" stroke="#111" stroke-width="1.400" fill="none"/></svg>
<div class="cbw" style="left:210px;width:165px"></div><div class="cb" style="left:211px;width:141px"><span>Liberation Serif</span></div><div class="cbb" style="left:352px"></div><svg style="left:358px;top:82px" width="10" height="8" viewBox="0 0 10 8"><path d="M2 1.900 L5 4.900 L8 1.900" stroke="#111" stroke-width="1.400" fill="none"/></svg>
<div class="cbw" style="left:383px;width:66px"></div><div class="cb" style="left:384px;width:42px"><span>12</span></div><div class="cbb" style="left:426px"></div><svg style="left:432px;top:82px" width="10" height="8" viewBox="0 0 10 8"><path d="M2 1.900 L5 4.900 L8 1.900" stroke="#111" stroke-width="1.400" fill="none"/></svg>
<svg style="left:0;top:66px" width="1279" height="42" viewBox="0 66 1279 42">
<defs>
<pattern id="grip2" x="3" y="79" width="3" height="3" patternUnits="userSpaceOnUse"><rect x="0" y="0" width="1" height="1" fill="#c3c1be"/><rect x="1" y="1" width="1" height="1" fill="#fdfdfc"/></pattern>
<linearGradient id="gA" x1="0" y1="0" x2="0" y2="1"><stop offset="0" stop-color="#b4cdec"/><stop offset="1" stop-color="#6c9ad6"/></linearGradient>
<linearGradient id="gDoc" x1="0" y1="0" x2="1" y2="1"><stop offset="0" stop-color="#ffffff"/><stop offset="0.5" stop-color="#f6f6f5"/><stop offset="1" stop-color="#e4e5e2"/></linearGradient>
<linearGradient id="gDocG" x1="0" y1="0" x2="1" y2="1"><stop offset="0" stop-color="#dfe0dd"/><stop offset="1" stop-color="#f4f4f3"/></linearGradient>
<linearGradient id="gBg" x1="0" y1="0" x2="1" y2="0.300"><stop offset="0" stop-color="#2a5aa4"/><stop offset="0.500" stop-color="#8fb0da"/><stop offset="1" stop-color="#f4f6f8"/></linearGradient>
<linearGradient id="gOr" x1="0" y1="0" x2="1" y2="1"><stop offset="0" stop-color="#fdb95a"/><stop offset="1" stop-color="#ee6c00"/></linearGradient>
<linearGradient id="gSil" x1="0" y1="0" x2="1" y2="1"><stop offset="0" stop-color="#f4f4f4"/><stop offset="1" stop-color="#a8a9a6"/></linearGradient>
<linearGradient id="gYel" x1="0" y1="0" x2="1" y2="1"><stop offset="0" stop-color="#f6e04a"/><stop offset="1" stop-color="#c9a208"/></linearGradient>
<linearGradient id="gOvf2" x1="0" y1="0" x2="0" y2="1"><stop offset="0" stop-color="#b1afac" stop-opacity="0.080"/><stop offset="1" stop-color="#b1afac"/></linearGradient>
<radialGradient id="gHand" cx="0.400" cy="0.300" r="0.800"><stop offset="0" stop-color="#fdc06a"/><stop offset="1" stop-color="#f28a14"/></radialGradient>
</defs>
<rect x="3" y="79" width="5" height="17" fill="url(#grip2)"/>
<g id="i-styles">
<rect x="19.500" y="75.500" width="21" height="21" fill="#f3f3f1" stroke="#8a8c88"/>
<path d="M26.500 75.500 V96.500 M33.500 75.500 V96.500 M19.500 82.500 H40.500 M19.500 89.500 H40.500" stroke="#8a8c88" stroke-width="1"/>
<rect x="21" y="77" width="4" height="4" fill="#d5d7d2"/><rect x="35" y="77" width="4" height="4" fill="#d5d7d2"/>
<rect x="21" y="84" width="4" height="4" fill="#d5d7d2"/><rect x="35" y="84" width="4" height="4" fill="#d5d7d2"/>
<rect x="21" y="91" width="4" height="4" fill="#d5d7d2"/><rect x="35" y="91" width="4" height="4" fill="#d5d7d2"/>
<rect x="26.500" y="75.500" width="7" height="7" fill="#f4dc18" stroke="#c9a208"/>
<rect x="29" y="92" width="8" height="2.800" fill="#204a87"/><rect x="30.500" y="93" width="5" height="0.800" fill="#7fa0d0"/>
<path d="M29.600 79.500 Q29.600 78.300 30.700 78.300 Q31.800 78.300 31.800 79.500 V84 Q32.300 83.300 33.200 83.600 Q33.900 83.800 34 84.500 Q34.600 84 35.300 84.300 Q36 84.600 36 85.300 Q36.700 85 37.300 85.400 Q37.900 85.800 37.900 86.500 V89.500 Q37.900 92.300 35 92.300 H32.500 Q30 92.300 28.600 90 L27.200 87.600 Q26.800 86.700 27.600 86.300 Q28.400 86 29 86.800 L29.600 87.600 Z" fill="url(#gHand)" stroke="#e07a08" stroke-width="0.600"/>
<path d="M32.200 87 V88.200 M33.800 87 V88.200 M35.400 87 V88.200" stroke="#fde2b0" stroke-width="0.700"/>
</g>
<g id="i-bold">
<ellipse cx="472.500" cy="93.300" rx="9.500" ry="1" fill="#444" opacity="0.200"/>
<path d="M463.500 92.500 L469.300 78.300 H475.700 L481.500 92.500 H476.200 L475.300 89.800 H469.700 L468.800 92.500 Z M470.100 86.500 H474.900 L472.500 80.800 Z" fill="url(#gA)" stroke="#2558a4" stroke-width="1" fill-rule="evenodd" stroke-linejoin="round"/>
</g>
<g id="i-italic">
<ellipse cx="506" cy="93.300" rx="8" ry="1" fill="#444" opacity="0.200"/>
<path d="M498.500 92.500 L509.300 78.300 H513.700 L511.600 92.500 H508.300 L508.700 89.600 H503.800 L501.800 92.500 Z M505.200 87.400 H509 L509.900 81.500 Z" fill="url(#gA)" stroke="#2558a4" stroke-width="1" fill-rule="evenodd" stroke-linejoin="round"/>
</g>
<g id="i-underline">
<path d="M531.200 90.500 L536.800 76.300 H540.200 L545.800 90.500 H543 L541.500 86.600 H535.500 L534 90.500 Z M536.300 84.500 H540.700 L538.500 78.800 Z" fill="url(#gA)" stroke="#2558a4" stroke-width="0.900" fill-rule="evenodd" stroke-linejoin="round"/>
<rect x="530.500" y="93.400" width="16" height="2.200" fill="#7fa6da" stroke="#2f62a8" stroke-width="0.800"/>
</g>
<rect x="559" y="77" width="1" height="19" fill="#cfcdca"/>
<!-- pressed button -->
<rect x="564.500" y="69.500" width="32" height="34" rx="3.500" fill="#cbc8c4" stroke="#a19e99"/>
<rect x="565.500" y="70.500" width="30" height="32" rx="2.500" fill="none" stroke="#f2f1f0" stroke-width="1" opacity="0.700"/>
<g><rect x="569" y="95.600" width="22" height="1.200" fill="#555" opacity="0.300"/><rect x="569.5" y="75.500" width="21" height="20" fill="url(#gDoc)" stroke="#85877f"/><rect x="570.5" y="76.500" width="19" height="18" fill="none" stroke="#ffffff" stroke-width="1"/><rect x="572" y="78" width="16" height="1" fill="#888a85"/><rect x="572" y="80" width="11" height="1" fill="#888a85"/><rect x="572" y="82" width="9" height="1" fill="#888a85"/><rect x="572" y="84" width="12" height="1" fill="#888a85"/><rect x="572" y="86" width="15" height="1" fill="#888a85"/><rect x="572" y="88" width="7" height="1" fill="#888a85"/><rect x="572" y="90" width="11" height="1" fill="#888a85"/><rect x="572" y="92" width="12" height="1" fill="#888a85"/></g>
<g><rect x="602" y="95.600" width="22" height="1.200" fill="#555" opacity="0.300"/><rect x="602.5" y="75.500" width="21" height="20" fill="url(#gDoc)" stroke="#85877f"/><rect x="603.5" y="76.500" width="19" height="18" fill="none" stroke="#ffffff" stroke-width="1"/><rect x="605" y="78" width="16" height="1" fill="#888a85"/><rect x="611" y="80" width="5" height="1" fill="#888a85"/><rect x="608" y="82" width="11" height="1" fill="#888a85"/><rect x="610" y="84" width="7" height="1" fill="#888a85"/><rect x="606" y="86" width="14" height="1" fill="#888a85"/><rect x="612" y="88" width="3" height="1" fill="#888a85"/><rect x="610" y="90" width="7" height="1" fill="#888a85"/><rect x="607" y="92" width="12" height="1" fill="#888a85"/></g>
<g><rect x="635" y="95.600" width="22" height="1.200" fill="#555" opacity="0.300"/><rect x="635.5" y="75.500" width="21" height="20" fill="url(#gDoc)" stroke="#85877f"/><rect x="636.5" y="76.500" width="19" height="18" fill="none" stroke="#ffffff" stroke-width="1"/><rect x="638" y="78" width="16" height="1" fill="#888a85"/><rect x="643" y="80" width="11" height="1" fill="#888a85"/><rect x="645" y="82" width="9" height="1" fill="#888a85"/><rect x="642" y="84" width="12" height="1" fill="#888a85"/><rect x="639" y="86" width="15" height="1" fill="#888a85"/><rect x="647" y="88" width="7" height="1" fill="#888a85"/><rect x="643" y="90" width="11" height="1" fill="#888a85"/><rect x="642" y="92" width="12" height="1" fill="#888a85"/></g>
<g><rect x="668" y="95.600" width="22" height="1.200" fill="#555" opacity="0.300"/><rect x="668.5" y="75.500" width="21" height="20" fill="url(#gDoc)" stroke="#85877f"/><rect x="669.5" y="76.500" width="19" height="18" fill="none" stroke="#ffffff" stroke-width="1"/><rect x="671" y="78" width="16" height="1" fill="#888a85"/><rect x="671" y="80" width="16" height="1" fill="#888a85"/><rect x="671" y="82" width="16" height="1" fill="#888a85"/><rect x="671" y="84" width="16" height="1" fill="#888a85"/><rect x="671" y="86" width="16" height="1" fill="#888a85"/><rect x="671" y="88" width="16" height="1" fill="#888a85"/><rect x="671" y="90" width="16" height="1" fill="#888a85"/><rect x="671" y="92" width="16" height="1" fill="#888a85"/></g>
<rect x="699" y="77" width="1" height="19" fill="#cfcdca"/>
<g id="i-num"><rect x="709" y="95.600" width="22" height="1.200" fill="#555" opacity="0.300"/><rect x="709.5" y="75.500" width="21" height="20" fill="url(#gDocG)" stroke="#85877f"/><rect x="710.5" y="76.500" width="19" height="18" fill="none" stroke="#ffffff" stroke-width="1"/><path d="M713 80 l1.300 -1 h0.900 v5 h-1.400 v-3.400 l-0.800 0.500 Z" fill="#204a87"/><path d="M712.8 86.800 q0.200 -0.900 1.400 -0.900 q1.300 0 1.300 1.100 q0 0.700 -1.200 1.700 l-0.400 0.300 h1.700 v1 h-3 v-0.900 l1.300 -1.200 q0.400 -0.500 0.400 -0.800 q0 -0.300 -0.300 -0.300 q-0.400 0 -0.400 0.400 Z" fill="#204a87"/><rect x="717" y="79" width="10" height="1" fill="#888a85"/><rect x="717" y="81" width="5" height="1" fill="#888a85"/><rect x="717" y="86" width="10" height="1" fill="#888a85"/><rect x="717" y="88" width="2" height="1" fill="#888a85"/><rect x="720" y="88" width="4" height="1" fill="#888a85"/></g>
<g id="i-bul"><rect x="742" y="95.600" width="22" height="1.200" fill="#555" opacity="0.300"/><rect x="742.5" y="75.500" width="21" height="20" fill="url(#gDocG)" stroke="#85877f"/><rect x="743.5" y="76.500" width="19" height="18" fill="none" stroke="#ffffff" stroke-width="1"/><rect x="746" y="79" width="2" height="2" fill="#777974"/><rect x="750" y="79" width="10" height="1" fill="#888a85"/><rect x="746" y="84" width="2" height="2" fill="#777974"/><rect x="750" y="84" width="10" height="1" fill="#888a85"/><rect x="746" y="89" width="2" height="2" fill="#777974"/><rect x="750" y="89" width="10" height="1" fill="#888a85"/><rect x="750" y="81" width="5" height="1" fill="#888a85"/><rect x="750" y="86" width="7" height="1" fill="#888a85"/><rect x="750" y="91" width="2" height="1" fill="#888a85"/><rect x="753" y="91" width="4" height="1" fill="#888a85"/></g>
<g id="i-dec"><rect x="775" y="95.600" width="22" height="1.200" fill="#555" opacity="0.300"/><rect x="775.5" y="75.500" width="21" height="20" fill="url(#gDocG)" stroke="#85877f"/><rect x="776.5" y="76.500" width="19" height="18" fill="none" stroke="#ffffff" stroke-width="1"/><path d="M778 85.500 L782.5 81 V90 Z" fill="#204a87"/><rect x="785" y="82" width="9" height="1" fill="#888a85"/><rect x="785" y="84" width="7" height="1" fill="#888a85"/><rect x="785" y="86" width="8" height="1" fill="#888a85"/><rect x="785" y="88" width="4" height="1" fill="#888a85"/></g>
<g id="i-inc"><rect x="808" y="95.600" width="22" height="1.200" fill="#555" opacity="0.300"/><rect x="808.5" y="75.500" width="21" height="20" fill="url(#gDocG)" stroke="#85877f"/><rect x="809.5" y="76.500" width="19" height="18" fill="none" stroke="#ffffff" stroke-width="1"/><path d="M812 81 L817 85.500 L812 90 Z" fill="#204a87"/><rect x="818" y="82" width="9" height="1" fill="#888a85"/><rect x="818" y="84" width="7" height="1" fill="#888a85"/><rect x="818" y="86" width="8" height="1" fill="#888a85"/><rect x="818" y="88" width="4" height="1" fill="#888a85"/></g>
<rect x="839" y="77" width="1" height="19" fill="#cfcdca"/>
<g id="i-fcolor">
<rect x="848" y="91" width="22" height="6" fill="#800000"/>
<circle cx="852" cy="84.500" r="3.300" fill="#6fd41e" stroke="#3f9a08" stroke-width="0.800"/>
<circle cx="852" cy="79" r="3.600" fill="#ee1c1c" stroke="#a00808" stroke-width="0.900"/>
<circle cx="857" cy="82" r="3.500" fill="#3f74c8" stroke="#1f4a90" stroke-width="0.900"/>
<circle cx="851" cy="78" r="1.200" fill="#ffffff" opacity="0.500"/><circle cx="856.200" cy="81" r="1.100" fill="#ffffff" opacity="0.450"/>
<path d="M859.400 85.400 Q860 83.800 863.400 83.800 Q867.300 83.800 867.300 87 V92 M867 87.400 H862.400 Q859 87.600 859 90 V92" fill="none" stroke="#2455a0" stroke-width="3.800"/>
<path d="M859.400 85.400 Q860 83.800 863.400 83.800 Q867.300 83.800 867.300 87 V92 M867 87.400 H862.400 Q859 87.600 859 90 V92" fill="none" stroke="#c0d2ec" stroke-width="1"/>
<rect x="848" y="91" width="22" height="6" fill="#800000"/>
</g>
<g shape-rendering="crispEdges"><path d="M882 83 h5 v1 h1 v1 h-1 v1 h-1 v1 h-1 v1 h-1 v-1 h-1 v-1 h-1 v-1 h-1 v-1 h1 Z" fill="#ffffff" opacity="0.750"/><g fill="#050505"><rect x="882" y="84" width="5" height="1"/><rect x="883" y="85" width="3" height="1"/><rect x="884" y="86" width="1" height="1"/></g></g>
<g id="i-hilite">
<rect x="898" y="91" width="22" height="6" fill="#ffff00"/>
<rect x="898" y="87" width="5" height="4" fill="#f0d418"/>
<ellipse cx="913" cy="89.500" rx="5" ry="1.500" fill="#555" opacity="0.200"/>
<path d="M902.300 90.300 L903.800 83.300 L908.800 78.800 L914.800 85.300 L909.300 89.300 Z" fill="url(#gYel)" stroke="#a88404" stroke-width="0.700"/>
<path d="M904.800 87.800 L906.800 83.300" stroke="#fdf3a0" stroke-width="1"/>
<path d="M907.800 79.300 L911.800 75.800 L918.800 83.300 L914.800 86.800 Z" fill="url(#gSil)" stroke="#6b6d69" stroke-width="0.800"/>
<path d="M911.800 75.600 L914.300 74 H921 V80 L918.800 83.100 Z" fill="url(#gOr)"/>
</g>
<g shape-rendering="crispEdges"><path d="M932 83 h5 v1 h1 v1 h-1 v1 h-1 v1 h-1 v1 h-1 v-1 h-1 v-1 h-1 v-1 h-1 v-1 h1 Z" fill="#ffffff" opacity="0.750"/><g fill="#050505"><rect x="932" y="84" width="5" height="1"/><rect x="933" y="85" width="3" height="1"/><rect x="934" y="86" width="1" height="1"/></g></g>
<g id="i-bgcolor">
<rect x="948.500" y="75.500" width="21" height="16" fill="url(#gBg)" stroke="#6f7a8c" stroke-width="1"/>
<path d="M948.500 91 V75.500 H962" fill="none" stroke="#1f4785" stroke-width="1"/>
<path d="M953 79.500 H963 M953 81.500 H958 M953 84.500 H963 M953 86.500 H960 M953 89.500 H963" stroke="#15233a" stroke-width="1"/>
<rect x="948.500" y="91.500" width="21" height="5" fill="#fbfbfb" stroke="#0a0a0a"/>
</g>
<g shape-rendering="crispEdges"><path d="M982 83 h5 v1 h1 v1 h-1 v1 h-1 v1 h-1 v1 h-1 v-1 h-1 v-1 h-1 v-1 h-1 v-1 h1 Z" fill="#ffffff" opacity="0.750"/><g fill="#050505"><rect x="982" y="84" width="5" height="1"/><rect x="983" y="85" width="3" height="1"/><rect x="984" y="86" width="1" height="1"/></g></g>
<rect x="997" y="69" width="10" height="35" fill="url(#gOvf2)"/>
<g shape-rendering="crispEdges"><path d="M999 95 h5 v1 h1 v1 h-1 v1 h-1 v1 h-1 v1 h-1 v-1 h-1 v-1 h-1 v-1 h-1 v-1 h1 Z" fill="#ffffff" opacity="0.750"/><g fill="#050505"><rect x="999" y="96" width="5" height="1"/><rect x="1000" y="97" width="3" height="1"/><rect x="1001" y="98" width="1" height="1"/></g></g>
</svg>
<!-- WORKSPACE -->
<div id="frame"></div>
<div id="fr-left0"></div>
<div id="fr-top"></div>
<div id="fr-left"></div>
<div id="fr-hi-top"></div>
<div id="fr-hi-left"></div>
<div style="left:1278px;top:108px;width:1px;height:890px;background:#f8f8f7"></div>
<!-- ruler corner -->
<div class="groove" style="left:5px;top:112px;width:19px;height:19px"></div>
<div style="left:11px;top:119px;width:2px;height:6px;background:#0a0a0a"></div>
<div style="left:11px;top:123px;width:7px;height:2px;background:#0a0a0a"></div>
<!-- horizontal ruler -->
<div style="left:249px;top:112px;width:76px;height:19px;border:1px solid #aaa8a4;border-right:0;box-shadow:inset 1px 1px 0 #fbfbfa,0 1px 0 #fbfbfa"></div>
<div style="left:325px;top:113px;width:643px;height:18px;background:#fff"></div>
<div class="groove" style="left:968px;top:112px;width:75px;height:19px"></div>
<svg style="left:0;top:108px" width="1279" height="28" viewBox="0 108 1279 28" shape-rendering="crispEdges"><rect x="258" y="121" width="1" height="1" fill="#222"/><rect x="267" y="121" width="1" height="1" fill="#222"/><rect x="277" y="120" width="1" height="3" fill="#111"/><rect x="287" y="121" width="1" height="1" fill="#222"/><rect x="296" y="121" width="1" height="1" fill="#222"/><rect x="306" y="121" width="1" height="1" fill="#222"/><rect x="315" y="121" width="1" height="1" fill="#222"/><rect x="335" y="121" width="1" height="1" fill="#222"/><rect x="344" y="121" width="1" height="1" fill="#222"/><rect x="354" y="121" width="1" height="1" fill="#222"/><rect x="363" y="121" width="1" height="1" fill="#222"/><rect x="373" y="120" width="1" height="3" fill="#111"/><rect x="383" y="121" width="1" height="1" fill="#222"/><rect x="392" y="121" width="1" height="1" fill="#222"/><rect x="402" y="121" width="1" height="1" fill="#222"/><rect x="411" y="121" width="1" height="1" fill="#222"/><rect x="431" y="121" width="1" height="1" fill="#222"/><rect x="440" y="121" width="1" height="1" fill="#222"/><rect x="450" y="121" width="1" height="1" fill="#222"/><rect x="459" y="121" width="1" height="1" fill="#222"/><rect x="469" y="120" width="1" height="3" fill="#111"/><rect x="479" y="121" width="1" height="1" fill="#222"/><rect x="488" y="121" width="1" height="1" fill="#222"/><rect x="498" y="121" width="1" height="1" fill="#222"/><rect x="507" y="121" width="1" height="1" fill="#222"/><rect x="527" y="121" width="1" height="1" fill="#222"/><rect x="536" y="121" width="1" height="1" fill="#222"/><rect x="546" y="121" width="1" height="1" fill="#222"/><rect x="555" y="121" width="1" height="1" fill="#222"/><rect x="565" y="120" width="1" height="3" fill="#111"/><rect x="575" y="121" width="1" height="1" fill="#222"/><rect x="584" y="121" width="1" height="1" fill="#222"/><rect x="594" y="121" width="1" height="1" fill="#222"/><rect x="603" y="121" width="1" height="1" fill="#222"/><rect x="623" y="121" width="1" height="1" fill="#222"/><rect x="632" y="121" width="1" height="1" fill="#222"/><rect x="642" y="121" width="1" height="1" fill="#222"/><rect x="651" y="121" width="1" height="1" fill="#222"/><rect x="661" y="120" width="1" height="3" fill="#111"/><rect x="671" y="121" width="1" height="1" fill="#222"/><rect x="680" y="121" width="1" height="1" fill="#222"/><rect x="690" y="121" width="1" height="1" fill="#222"/><rect x="699" y="121" width="1" height="1" fill="#222"/><rect x="719" y="121" width="1" height="1" fill="#222"/><rect x="728" y="121" width="1" height="1" fill="#222"/><rect x="738" y="121" width="1" height="1" fill="#222"/><rect x="747" y="121" width="1" height="1" fill="#222"/><rect x="757" y="120" width="1" height="3" fill="#111"/><rect x="767" y="121" width="1" height="1" fill="#222"/><rect x="776" y="121" width="1" height="1" fill="#222"/><rect x="786" y="121" width="1" height="1" fill="#222"/><rect x="795" y="121" width="1" height="1" fill="#222"/><rect x="815" y="121" width="1" height="1" fill="#222"/><rect x="824" y="121" width="1" height="1" fill="#222"/><rect x="834" y="121" width="1" height="1" fill="#222"/><rect x="843" y="121" width="1" height="1" fill="#222"/><rect x="853" y="120" width="1" height="3" fill="#111"/><rect x="863" y="121" width="1" height="1" fill="#222"/><rect x="872" y="121" width="1" height="1" fill="#222"/><rect x="882" y="121" width="1" height="1" fill="#222"/><rect x="891" y="121" width="1" height="1" fill="#222"/><rect x="911" y="121" width="1" height="1" fill="#222"/><rect x="920" y="121" width="1" height="1" fill="#222"/><rect x="930" y="121" width="1" height="1" fill="#222"/><rect x="939" y="121" width="1" height="1" fill="#222"/><rect x="949" y="120" width="1" height="3" fill="#111"/><rect x="959" y="121" width="1" height="1" fill="#222"/><rect x="978" y="121" width="1" height="1" fill="#222"/><rect x="987" y="121" width="1" height="1" fill="#222"/><rect x="1007" y="121" width="1" height="1" fill="#222"/><rect x="1016" y="121" width="1" height="1" fill="#222"/><rect x="1026" y="121" width="1" height="1" fill="#222"/><rect x="1035" y="121" width="1" height="1" fill="#222"/><rect x="372" y="128" width="1" height="3" fill="#111"/><rect x="370" y="131" width="5" height="1" fill="#111"/><rect x="419" y="128" width="1" height="3" fill="#111"/><rect x="417" y="131" width="5" height="1" fill="#111"/><rect x="466" y="128" width="1" height="3" fill="#111"/><rect x="464" y="131" width="5" height="1" fill="#111"/><rect x="513" y="128" width="1" height="3" fill="#111"/><rect x="511" y="131" width="5" height="1" fill="#111"/><rect x="560" y="128" width="1" height="3" fill="#111"/><rect x="558" y="131" width="5" height="1" fill="#111"/><rect x="607" y="128" width="1" height="3" fill="#111"/><rect x="605" y="131" width="5" height="1" fill="#111"/><rect x="654" y="128" width="1" height="3" fill="#111"/><rect x="652" y="131" width="5" height="1" fill="#111"/><rect x="701" y="128" width="1" height="3" fill="#111"/><rect x="699" y="131" width="5" height="1" fill="#111"/><rect x="748" y="128" width="1" height="3" fill="#111"/><rect x="746" y="131" width="5" height="1" fill="#111"/><rect x="795" y="128" width="1" height="3" fill="#111"/><rect x="793" y="131" width="5" height="1" fill="#111"/><rect x="842" y="128" width="1" height="3" fill="#111"/><rect x="840" y="131" width="5" height="1" fill="#111"/><rect x="889" y="128" width="1" height="3" fill="#111"/><rect x="887" y="131" width="5" height="1" fill="#111"/><rect x="936" y="128" width="1" height="3" fill="#111"/><rect x="934" y="131" width="5" height="1" fill="#111"/></svg>
<span class="rnum" style="left:411px;top:115px">1</span><span class="rnum" style="left:507px;top:115px">2</span><span class="rnum" style="left:603px;top:115px">3</span><span class="rnum" style="left:699px;top:115px">4</span><span class="rnum" style="left:795px;top:115px">5</span><span class="rnum" style="left:891px;top:115px">6</span><span class="rnum" style="left:987px;top:115px">7</span>
<svg style="left:315px;top:110px" width="20" height="24" viewBox="315 110 20 24">
<path d="M319.5 112.5 H331.5 V115.2 L325.5 121.8 L319.5 115.2 Z" fill="#edeceb" stroke="#0a0a0a" stroke-width="1"/>
<path d="M319.5 131.5 H331.5 V128.5 L325.5 121.9 L319.5 128.5 Z" fill="#edeceb" stroke="#0a0a0a" stroke-width="1"/>
</svg>
<svg style="left:958px;top:118px" width="20" height="16" viewBox="958 118 20 16">
<path d="M962.5 131.5 H974.5 V128.5 L968.5 122.200 L962.5 128.5 Z" fill="#edeceb" stroke="#0a0a0a" stroke-width="1"/>
</svg>
<!-- vertical ruler -->
<div style="left:6px;top:251px;width:18px;height:732px;background:#fff"></div>
<div class="groove" style="left:5px;top:175px;width:19px;height:76px"></div>
<svg style="left:0;top:170px" width="29" height="813" viewBox="0 170 29 813" shape-rendering="crispEdges"><rect x="14" y="184" width="1" height="1" fill="#222"/><rect x="14" y="193" width="1" height="1" fill="#222"/><rect x="13" y="203" width="3" height="1" fill="#111"/><rect x="14" y="213" width="1" height="1" fill="#222"/><rect x="14" y="222" width="1" height="1" fill="#222"/><rect x="14" y="232" width="1" height="1" fill="#222"/><rect x="14" y="241" width="1" height="1" fill="#222"/><rect x="14" y="261" width="1" height="1" fill="#222"/><rect x="14" y="270" width="1" height="1" fill="#222"/><rect x="14" y="280" width="1" height="1" fill="#222"/><rect x="14" y="289" width="1" height="1" fill="#222"/><rect x="13" y="299" width="3" height="1" fill="#111"/><rect x="14" y="309" width="1" height="1" fill="#222"/><rect x="14" y="318" width="1" height="1" fill="#222"/><rect x="14" y="328" width="1" height="1" fill="#222"/><rect x="14" y="337" width="1" height="1" fill="#222"/><rect x="14" y="357" width="1" height="1" fill="#222"/><rect x="14" y="366" width="1" height="1" fill="#222"/><rect x="14" y="376" width="1" height="1" fill="#222"/><rect x="14" y="385" width="1" height="1" fill="#222"/><rect x="13" y="395" width="3" height="1" fill="#111"/><rect x="14" y="405" width="1" height="1" fill="#222"/><rect x="14" y="414" width="1" height="1" fill="#222"/><rect x="14" y="424" width="1" height="1" fill="#222"/><rect x="14" y="433" width="1" height="1" fill="#222"/><rect x="14" y="453" width="1" height="1" fill="#222"/><rect x="14" y="462" width="1" height="1" fill="#222"/><rect x="14" y="472" width="1" height="1" fill="#222"/><rect x="14" y="481" width="1" height="1" fill="#222"/><rect x="13" y="491" width="3" height="1" fill="#111"/><rect x="14" y="501" width="1" height="1" fill="#222"/><rect x="14" y="510" width="1" height="1" fill="#222"/><rect x="14" y="520" width="1" height="1" fill="#222"/><rect x="14" y="529" width="1" height="1" fill="#222"/><rect x="14" y="549" width="1" height="1" fill="#222"/><rect x="14" y="558" width="1" height="1" fill="#222"/><rect x="14" y="568" width="1" height="1" fill="#222"/><rect x="14" y="577" width="1" height="1" fill="#222"/><rect x="13" y="587" width="3" height="1" fill="#111"/><rect x="14" y="597" width="1" height="1" fill="#222"/><rect x="14" y="606" width="1" height="1" fill="#222"/><rect x="14" y="616" width="1" height="1" fill="#222"/><rect x="14" y="625" width="1" height="1" fill="#222"/><rect x="14" y="645" width="1" height="1" fill="#222"/><rect x="14" y="654" width="1" height="1" fill="#222"/><rect x="14" y="664" width="1" height="1" fill="#222"/><rect x="14" y="673" width="1" height="1" fill="#222"/><rect x="13" y="683" width="3" height="1" fill="#111"/><rect x="14" y="693" width="1" height="1" fill="#222"/><rect x="14" y="702" width="1" height="1" fill="#222"/><rect x="14" y="712" width="1" height="1" fill="#222"/><rect x="14" y="721" width="1" height="1" fill="#222"/><rect x="14" y="741" width="1" height="1" fill="#222"/><rect x="14" y="750" width="1" height="1" fill="#222"/><rect x="14" y="760" width="1" height="1" fill="#222"/><rect x="14" y="769" width="1" height="1" fill="#222"/><rect x="13" y="779" width="3" height="1" fill="#111"/><rect x="14" y="789" width="1" height="1" fill="#222"/><rect x="14" y="798" width="1" height="1" fill="#222"/><rect x="14" y="808" width="1" height="1" fill="#222"/><rect x="14" y="817" width="1" height="1" fill="#222"/><rect x="14" y="837" width="1" height="1" fill="#222"/><rect x="14" y="846" width="1" height="1" fill="#222"/><rect x="14" y="856" width="1" height="1" fill="#222"/><rect x="14" y="865" width="1" height="1" fill="#222"/><rect x="13" y="875" width="3" height="1" fill="#111"/><rect x="14" y="885" width="1" height="1" fill="#222"/><rect x="14" y="894" width="1" height="1" fill="#222"/><rect x="14" y="904" width="1" height="1" fill="#222"/><rect x="14" y="913" width="1" height="1" fill="#222"/><rect x="14" y="933" width="1" height="1" fill="#222"/><rect x="14" y="942" width="1" height="1" fill="#222"/><rect x="14" y="952" width="1" height="1" fill="#222"/><rect x="14" y="961" width="1" height="1" fill="#222"/><rect x="13" y="971" width="3" height="1" fill="#111"/><rect x="14" y="981" width="1" height="1" fill="#222"/></svg>
<span class="vnum" style="left:4px;top:341px">1</span><span class="vnum" style="left:4px;top:437px">2</span><span class="vnum" style="left:4px;top:533px">3</span><span class="vnum" style="left:4px;top:629px">4</span><span class="vnum" style="left:4px;top:725px">5</span><span class="vnum" style="left:4px;top:821px">6</span><span class="vnum" style="left:4px;top:917px">7</span>
<!-- DOCUMENT -->
<div id="doc"></div>
<div id="doc-hi-t"></div>
<div id="doc-hi-l"></div>
<div id="page"></div>
<div id="pshadow"></div>
<div class="tbound" style="left:325px;top:251px;width:643px;height:1px"></div>
<div class="tbound" style="left:325px;top:251px;width:1px;height:732px"></div>
<div class="tbound" style="left:967px;top:251px;width:1px;height:732px"></div>
<div id="cursor" style="left:325px;top:251px;width:2px;height:17px;background:#000"></div>
<!-- SCROLLBARS -->
<div style="left:1263px;top:116px;width:15px;height:814px;background:#d6d5d3;border-left:1px solid #a9a6a1;border-right:1px solid #a9a6a1"></div>
<div style="left:1263px;top:938px;width:15px;height:45px;background:#f2f1f0"></div>
<div class="sbtn" style="left:1263px;top:109px;width:15px;height:15px"></div>
<svg style="left:1263px;top:109px" width="15" height="15" viewBox="0 0 15 15"><path d="M4.300 9 L7.500 5.800 L10.700 9" stroke="#111" stroke-width="1.5" fill="none"/></svg>
<div class="sth-v" style="left:1263px;top:124px;width:15px;height:563px;border-bottom:1px solid #6f6494;box-shadow:inset 1px 0 0 #beb5d9,inset 0 -1px 0 #b5abd2"></div>
<div class="sbtn" style="left:1263px;top:923px;width:15px;height:15px"></div>
<svg style="left:1263px;top:923px" width="15" height="15" viewBox="0 0 15 15"><path d="M4.300 6 L7.500 9.200 L10.700 6" stroke="#111" stroke-width="1.5" fill="none"/></svg>
<!-- nav buttons -->
<div class="sbtn" style="left:1264px;top:939px;width:13px;height:13px"></div>
<svg style="left:1264px;top:939px" width="13" height="13" viewBox="0 0 13 13"><path d="M3.5 6 L6.5 3 L9.5 6 Z M3.5 10 L6.5 7 L9.5 10 Z" fill="#111"/></svg>
<div class="sbtn" style="left:1264px;top:954px;width:13px;height:13px"></div>
<svg style="left:1264px;top:954px" width="13" height="13" viewBox="0 0 13 13"><path d="M3.600 10 Q3.600 3.800 9.800 3.800 V10 Z" fill="#2a6290"/><path d="M5.600 10 Q5.800 6 9.800 5.800 V10 Z" fill="#6f9cc2"/></svg>
<div class="sbtn" style="left:1264px;top:969px;width:13px;height:13px"></div>
<svg style="left:1264px;top:969px" width="13" height="13" viewBox="0 0 13 13"><path d="M3.5 3 L6.5 6 L9.5 3 Z M3.5 7 L6.5 10 L9.5 7 Z" fill="#111"/></svg>
<!-- horizontal -->
<div class="sbtn" style="left:2px;top:983px;width:15px;height:15px"></div>
<svg style="left:2px;top:983px" width="15" height="15" viewBox="0 0 15 15"><path d="M9 4.300 L5.800 7.500 L9 10.700" stroke="#111" stroke-width="1.5" fill="none"/></svg>
<div class="sth-h" style="left:17px;top:983px;width:1231px;height:15px;border-right:1px solid #6f6494;box-shadow:inset 0 1px 0 #beb5d9"></div>
<div style="left:627px;top:988px;width:1px;height:5px;background:#5a4e7c;box-shadow:3px 0 0 #5a4e7c,6px 0 0 #5a4e7c"></div>
<div class="sbtn" style="left:1248px;top:983px;width:15px;height:15px"></div>
<svg style="left:1248px;top:983px" width="15" height="15" viewBox="0 0 15 15"><path d="M6 4.300 L9.200 7.500 L6 10.700" stroke="#111" stroke-width="1.5" fill="none"/></svg>
<!-- STATUS BAR -->
<div style="left:0;top:998px;width:1279px;height:25px;background:#edeceb"></div>
<div style="left:0;top:998px;width:1279px;height:2px;background:#f7f7f6"></div>
<div class="sf" style="left:5px;width:192px"><span style="left:5px">Page 1 / 1</span></div><div class="sfr" style="left:197px"></div>
<div class="sf" style="left:202px;width:176px"><span style="left:5px">Default</span></div><div class="sfr" style="left:378px"></div>
<div class="sf" style="left:383px;width:213px"><span style="left:0;width:212px;text-align:center">English (USA)</span></div><div class="sfr" style="left:596px"></div>
<div class="sf" style="left:601px;width:45px"><span style="left:0;width:44px;text-align:center">INSRT</span></div><div class="sfr" style="left:646px"></div>
<div class="sf" style="left:651px;width:33px"><span style="left:0;width:32px;text-align:center">STD</span></div><div class="sfr" style="left:684px"></div>
<div class="sf" style="left:689px;width:18px"></div><div class="sfr" style="left:707px"></div>
<div class="sf" style="left:712px;width:25px"></div><div class="sfr" style="left:737px"></div>
<div class="sf" style="left:742px;width:265px"></div><div class="sfr" style="left:1007px"></div>
<div class="sf" style="left:1012px;width:72px"></div><div class="sfr" style="left:1084px"></div>
<div class="sf" style="left:1089px;width:139px"></div><div class="sfr" style="left:1228px"></div>
<div class="sf" style="left:1233px;width:41px"><span style="left:0;width:41px;text-align:center">100%</span></div><div class="sfr" style="left:1274px"></div>
<svg style="left:0;top:1000px" width="1279" height="23" viewBox="0 1000 1279 23">
<defs>
<linearGradient id="gPg" x1="0" y1="0" x2="0" y2="1"><stop offset="0" stop-color="#cfd8ea"/><stop offset="1" stop-color="#ffffff"/></linearGradient>
<linearGradient id="gPgS" x1="0" y1="0" x2="0" y2="1"><stop offset="0" stop-color="#93ace0"/><stop offset="1" stop-color="#eef2fb"/></linearGradient>
<linearGradient id="gPgO" x1="0" y1="0" x2="0" y2="1"><stop offset="0" stop-color="#8d959f"/><stop offset="1" stop-color="#56606b"/></linearGradient>
<linearGradient id="gZb" x1="0" y1="0" x2="0" y2="1"><stop offset="0" stop-color="#eef5fc"/><stop offset="1" stop-color="#a3c4ea"/></linearGradient>
<radialGradient id="gKnob" cx="0.5" cy="0.6" r="0.6"><stop offset="0" stop-color="#8fb6dc"/><stop offset="1" stop-color="#4a7aa8"/></radialGradient>
<linearGradient id="gExc" x1="0" y1="0" x2="1" y2="0"><stop offset="0" stop-color="#e07008"/><stop offset="0.5" stop-color="#f8a030"/><stop offset="1" stop-color="#d86400"/></linearGradient>
<linearGradient id="gMod" x1="0" y1="0" x2="1" y2="0"><stop offset="0" stop-color="#ffffff"/><stop offset="0.5" stop-color="#fbfbfa"/><stop offset="0.6" stop-color="#dcdedb"/><stop offset="1" stop-color="#f4f4f3"/></linearGradient>
</defs>
<!-- doc modified -->
<path d="M693.800 1005.500 H700 Q701 1005.500 703.500 1008.500 V1017 Q703.500 1018.500 702 1018.500 H693.800 Q692.500 1018.500 692.500 1017 V1007 Q692.500 1005.500 693.800 1005.500 Z" fill="url(#gMod)" stroke="#777974" stroke-width="1"/>
<path d="M699.800 1006 Q700.300 1008.800 703 1009" fill="none" stroke="#a9aba7" stroke-width="0.800"/>
<rect x="694.800" y="1007" width="3.400" height="5.800" rx="1.600" fill="url(#gExc)"/>
<circle cx="696.500" cy="1015.500" r="1.600" fill="#e87808"/>
<!-- view layout -->
<path d="M1020.500 1007.500 H1025.500 L1028.500 1010.500 V1017.500 H1020.500 Z" fill="url(#gPg)" stroke="url(#gPgO)" stroke-width="1"/>
<path d="M1025.500 1007.500 V1010.500 H1028.500" fill="#ffffff" stroke="#7d8690" stroke-width="0.800"/>
<path d="M1035.500 1007.500 H1040.500 L1043.500 1010.500 V1017.500 H1035.500 Z" fill="url(#gPgS)" stroke="#124684" stroke-width="1.200"/>
<path d="M1040.500 1007.500 V1010.500 H1043.500 Z" fill="#ffffff" stroke="#124684" stroke-width="0.900"/>
<path d="M1045.500 1007.500 H1050.500 L1053.500 1010.500 V1017.500 H1045.500 Z" fill="url(#gPgS)" stroke="#124684" stroke-width="1.200"/>
<path d="M1050.500 1007.500 V1010.500 H1053.500 Z" fill="#ffffff" stroke="#124684" stroke-width="0.900"/>
<path d="M1060.500 1010.500 L1063.500 1007.500 H1073.500 L1076.500 1010.500 V1017.500 H1060.500 Z" fill="url(#gPg)" stroke="url(#gPgO)" stroke-width="1"/>
<path d="M1068.500 1007.500 V1017.500" stroke="#6c7580" stroke-width="1"/>
<path d="M1060.500 1010.500 H1063.500 V1007.500 M1073.500 1007.500 V1010.500 H1076.500" fill="none" stroke="#7d8690" stroke-width="0.800"/>
<!-- zoom slider -->
<circle cx="1099.500" cy="1013.500" r="5.200" fill="url(#gZb)" stroke="#2c3440" stroke-width="1.100"/>
<rect x="1097" y="1012.800" width="5" height="1.500" fill="#0f4080"/>
<rect x="1111" y="1012" width="97" height="2" fill="#ffffff"/>
<rect x="1110" y="1011" width="98" height="1" fill="#707070"/>
<rect x="1110" y="1011" width="1" height="3" fill="#707070"/>
<rect x="1140" y="1007" width="1" height="11" fill="#5a5a5a"/>
<rect x="1158" y="1007" width="1" height="12" fill="#3a4a5c" opacity="0.700"/>
<circle cx="1158.500" cy="1013" r="3.700" fill="url(#gKnob)" stroke="#1c3c5e" stroke-width="1.100"/>
<circle cx="1218.500" cy="1013.500" r="5.200" fill="url(#gZb)" stroke="#2c3440" stroke-width="1.100"/>
<rect x="1216" y="1012.800" width="5" height="1.500" fill="#0f4080"/>
<rect x="1217.800" y="1011" width="1.500" height="5" fill="#0f4080"/>
</svg>
</div>
</body>
</html>
